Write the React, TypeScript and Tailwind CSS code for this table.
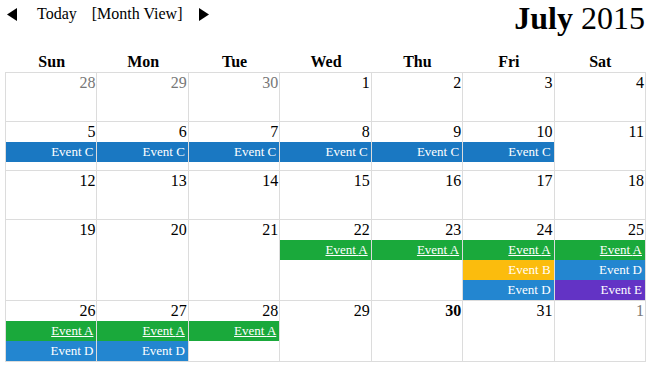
import React from "react";

type Ev = "A" | "B" | "C" | "D" | "E";
type Day = { d: number; other?: boolean; today?: boolean; events?: Ev[] };

const eventStyle: Record<Ev, string> = {
  A: "bg-[#1aa93b] underline",
  B: "bg-[#fbbc0d]",
  C: "bg-[#1a78c2]",
  D: "bg-[#2386d0]",
  E: "bg-[#6333c5]",
};

const weeks: Day[][] = [
  [{ d: 28, other: true }, { d: 29, other: true }, { d: 30, other: true }, { d: 1 }, { d: 2 }, { d: 3 }, { d: 4 }],
  [
    { d: 5, events: ["C"] },
    { d: 6, events: ["C"] },
    { d: 7, events: ["C"] },
    { d: 8, events: ["C"] },
    { d: 9, events: ["C"] },
    { d: 10, events: ["C"] },
    { d: 11 },
  ],
  [{ d: 12 }, { d: 13 }, { d: 14 }, { d: 15 }, { d: 16 }, { d: 17 }, { d: 18 }],
  [
    { d: 19 },
    { d: 20 },
    { d: 21 },
    { d: 22, events: ["A"] },
    { d: 23, events: ["A"] },
    { d: 24, events: ["A", "B", "D"] },
    { d: 25, events: ["A", "D", "E"] },
  ],
  [
    { d: 26, events: ["A", "D"] },
    { d: 27, events: ["A", "D"] },
    { d: 28, events: ["A"] },
    { d: 29 },
    { d: 30, today: true },
    { d: 31 },
    { d: 1, other: true },
  ],
];

const dayNames = ["Sun", "Mon", "Tue", "Wed", "Thu", "Fri", "Sat"];

function Arrow({ dir }: { dir: "left" | "right" }) {
  return (
    <svg width="10" height="13" viewBox="0 0 10 13" className="block">
      <polygon points={dir === "left" ? "10,0 10,13 0,6.5" : "0,0 0,13 10,6.5"} fill="#000" />
    </svg>
  );
}

export default function App() {
  return (
    <div className="h-[369px] w-[653px] overflow-hidden bg-white font-['Liberation_Serif',serif] text-black">
      <div className="flex items-start justify-between pl-[7px] pr-2">
        <div className="flex items-center pt-1 text-base leading-5">
          <Arrow dir="left" />
          <span className="ml-5">Today</span>
          <span className="ml-[15px]">[Month View]</span>
          <span className="ml-4">
            <Arrow dir="right" />
          </span>
        </div>
        <h1 className="text-[32px] leading-9">
          <b>July</b> 2015
        </h1>
      </div>

      <div className="ml-[5px] mt-4 w-[641px]">
        <div className="grid h-5 grid-cols-7 pl-px text-base font-bold leading-5">
          {dayNames.map((n) => (
            <div key={n} className="text-center">
              {n}
            </div>
          ))}
        </div>

        <div className="grid grid-cols-7 border-l border-t border-[#dcdcdc]">
          {weeks.flat().map((day, i) => (
            <div key={i} className="min-h-[49px] border-b border-r border-[#dcdcdc]">
              <div
                className={`h-5 pr-px text-right text-base leading-5 ${
                  day.other ? "text-[#777]" : ""
                } ${day.today ? "font-bold" : ""}`}
              >
                {day.d}
              </div>
              {day.events?.map((e) => (
                <div
                  key={e}
                  className={`h-5 pr-[3px] text-right font-['Liberation_Serif',serif] text-[13px] leading-5 text-white ${eventStyle[e]}`}
                >
                  Event {e}
                </div>
              ))}
            </div>
          ))}
        </div>
      </div>
    </div>
  );
}
